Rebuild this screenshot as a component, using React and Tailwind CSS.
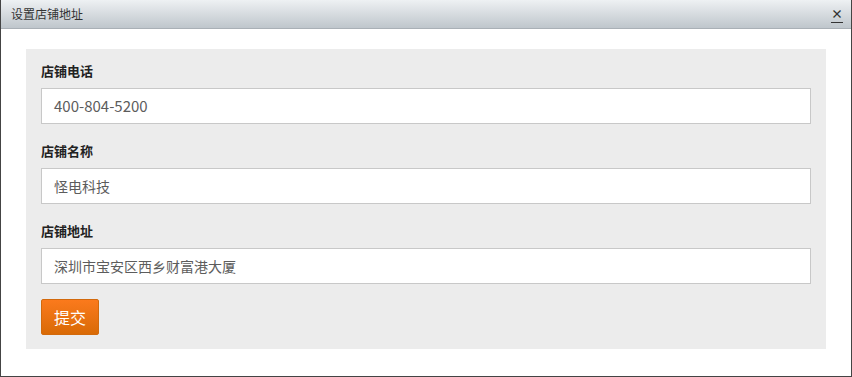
export default function App() {
  const fields = [
    { label: '店铺电话', value: '400-804-5200', size: 'text-[15px]' },
    { label: '店铺名称', value: '怪电科技', size: 'text-[14px]' },
    { label: '店铺地址', value: '深圳市宝安区西乡财富港大厦', size: 'text-[14px]' },
  ]

  return (
    <div
      className="w-[852px] h-[377px] bg-white border border-t-0 border-[#444] flex flex-col"
      style={{ fontFamily: '"Microsoft YaHei", "Noto Sans CJK SC", sans-serif' }}
    >
      {/* 标题栏 */}
      <div className="h-[29px] shrink-0 flex items-center justify-between pl-[10px] pr-[8px] bg-gradient-to-b from-[#eef1f3] to-[#bfc6cc] border-b border-[#a9b0b6]">
        <span className="text-[12px] text-[#333]">设置店铺地址</span>
        <span className="text-[12px] leading-none text-[#333] font-bold underline underline-offset-[3px]">×</span>
      </div>

      <div className="flex-1 px-[25px] pt-[20px]">
        <div className="bg-[#ececec] px-[15px] pt-[12px] pb-[14px]">
          {fields.map((f, i) => (
            <div key={f.label} className={i > 0 ? 'mt-[17px]' : ''}>
              <div className="h-[20px] leading-[20px] text-[13px] font-bold text-[#222] mb-[7px]">{f.label}</div>
              <div className={`h-[36px] bg-white border border-[#c8c8c8] flex items-center px-[12px] ${f.size} text-[#5c5c5c]`}>
                {f.value}
              </div>
            </div>
          ))}
          <button className="mt-[15px] w-[58px] h-[36px] rounded-[2px] border border-[#d2690c] bg-gradient-to-b from-[#fb7a1c] to-[#d96a05] text-white text-[16px] flex items-center justify-center">
            提交
          </button>
        </div>
      </div>
    </div>
  )
}
